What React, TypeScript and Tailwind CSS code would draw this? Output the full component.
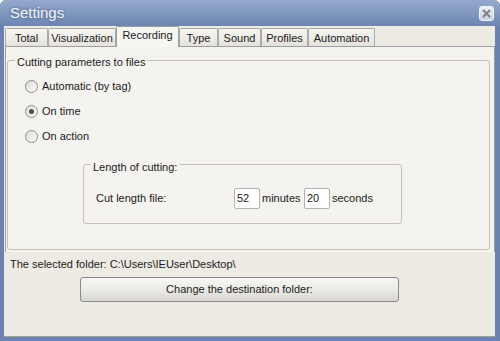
import React from 'react';

const tabs = [
  { name: 'Total', w: 'w-[43px]' },
  { name: 'Visualization', w: 'w-[68px]' },
  { name: 'Recording', w: 'w-[63px]' },
  { name: 'Type', w: 'w-[39px]' },
  { name: 'Sound', w: 'w-[43px]' },
  { name: 'Profiles', w: 'w-[47px]' },
  { name: 'Automation', w: 'w-[67px]' },
];

function Radio({ label, checked }: { label: string; checked?: boolean }) {
  return (
    <div className="flex h-[25px] items-center">
      <span className="flex h-[13px] w-[13px] items-center justify-center rounded-full border border-[#8d8d8d] bg-gradient-to-br from-[#dcdcdc] to-[#fbfbfb]">
        {checked && <span className="h-[5px] w-[5px] rounded-full bg-[#4d4d4d]" />}
      </span>
      <span className="ml-[4px]">{label}</span>
    </div>
  );
}

export default function App() {
  return (
    <div
      className="flex h-[341px] w-[500px] flex-col overflow-hidden rounded-t-[6px] bg-[#6a82ad] px-0 pb-[4px] text-[11px] leading-[13px] text-[#1b1b1b]"
      style={{ fontFamily: '"Liberation Sans", Arial, sans-serif' }}
    >
      {/* Title bar */}
      <div className="flex h-[26px] shrink-0 items-center justify-between bg-gradient-to-b from-[#94a9cd] to-[#6d86b1] pl-[10px] pr-[6px]">
        <span className="text-[15px] leading-[18px] text-[#f4f6fa] [text-shadow:0_0_3px_rgba(40,60,100,0.6)]">Settings</span>
        <button className="flex h-[15px] w-[15px] items-center justify-center rounded-[3px] border border-[#eef1f6] bg-gradient-to-b from-[#eef1f5] to-[#c9d1dd]">
          <svg width="9" height="9" viewBox="0 0 9 9">
            <path d="M1 1L8 8M8 1L1 8" stroke="#7b7f86" strokeWidth="2" />
          </svg>
        </button>
      </div>

      {/* Body */}
      <div className="ml-[4px] mr-[5px] flex flex-1 flex-col border-b border-[#a59f92] bg-[#eeebe5]">
        {/* Tabs */}
        <div className="flex h-[20px] shrink-0 items-end pl-[1px]">
          {tabs.map((t) =>
            t.name === 'Recording' ? (
              <div
                key={t.name}
                className={`${t.w} relative z-10 -mb-px flex h-[21px] items-start justify-center rounded-t-[2px] border border-b-0 border-[#9aa0a2] bg-[#f7f6f2] pt-[2px]`}
              >
                {t.name}
              </div>
            ) : (
              <div
                key={t.name}
                className={`${t.w} flex h-[18px] items-center justify-center rounded-t-[2px] border border-b-0 border-[#a7abad] bg-gradient-to-b from-[#f6f5f1] to-[#e6e3dc] pt-[1px]`}
              >
                {t.name}
              </div>
            )
          )}
        </div>

        {/* Tab page */}
        <div className="ml-[1px] flex flex-col border-x border-t border-[#9aa0a2] bg-[#f5f3ef] pb-[2px]">
          <div className="relative ml-[1px] mr-[4px] mt-[13px] h-[190px] rounded-[3px] border border-[#c4c1b8] pl-[17px] pt-[13px]">
            <span className="absolute left-[7px] top-[-5px] bg-[#f5f3ef] px-[2px]">Cutting parameters to files</span>
            <Radio label="Automatic (by tag)" />
            <Radio label="On time" checked />
            <Radio label="On action" />

            <div className="relative ml-[58px] mt-[15px] h-[60px] w-[319px] rounded-[3px] border border-[#c4c1b8]">
              <span className="absolute left-[7px] top-[-4px] bg-[#f5f3ef] px-[2px]">Length of cutting:</span>
              <div className="flex h-[21px] items-center pl-[12px] mt-[23px]">
                <span className="w-[138px]">Cut length file:</span>
                <span className="flex h-[21px] w-[26px] items-center rounded-[2px] border border-[#b3b3b3] bg-white pl-[2px]">52</span>
                <span className="ml-[2px] w-[39px]">minutes</span>
                <span className="ml-[3px] flex h-[21px] w-[26px] items-center rounded-[2px] border border-[#b3b3b3] bg-white pl-[2px]">20</span>
                <span className="ml-[2px]">seconds</span>
              </div>
            </div>
          </div>
        </div>

        <div className="mt-[6px] pl-[6px]">The selected folder: C:\Users\IEUser\Desktop\</div>
        <button className="ml-[76px] mt-[6px] flex h-[25px] w-[319px] items-center justify-center rounded-[3px] border border-[#8a8a8a] bg-gradient-to-b from-[#f7f7f5] via-[#ebeae6] to-[#d9d7d1]">
          Change the destination folder:
        </button>
      </div>
    </div>
  );
}
